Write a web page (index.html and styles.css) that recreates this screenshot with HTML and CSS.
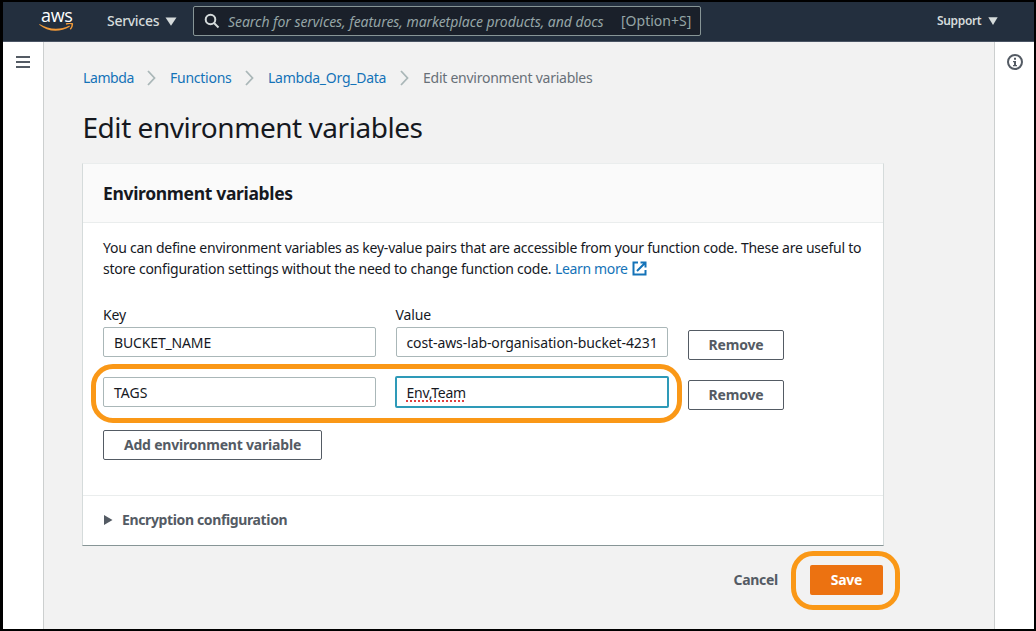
FILE: index.html
```html
<!DOCTYPE html>
<html lang="en">
<head>
<meta charset="utf-8">
<title>Edit environment variables</title>
<link rel="stylesheet" href="styles.css">
</head>
<body>
<div class="window">
  <header class="topbar">
    <div class="logo">
      <span class="logo-text">aws</span>
      <svg class="logo-smile" width="35" height="10" viewBox="0 0 35 10"><path d="M.5 1C9.500 6.500 20.500 7.500 30.500 2.500l.3 1.300C20.500 9.800 8.500 9 .2 1.800z" fill="#f29a38"/><path d="M27 1C29.500.2 32 .1 33.300.8c.2 2-.6 3.800-2 5.500" fill="none" stroke="#f29a38" stroke-width="1.500"/></svg>
    </div>
    <div class="services">Services</div>
    <svg class="caret" width="12" height="9" viewBox="0 0 12 9"><path d="M.5.5h11L6 8.800z" fill="#d5dbdb"/></svg>
    <div class="search">
      <svg width="16" height="16" viewBox="0 0 16 16" fill="none" stroke="#d5dbdb" stroke-width="2"><circle cx="6.500" cy="6.500" r="4.800"/><path d="M10 10l4.500 4.500"/></svg>
      <span class="placeholder">Search for services, features, marketplace products, and docs</span>
      <span class="shortcut">[Option+S]</span>
    </div>
    <div class="support">Support</div>
    <svg class="caret-small" width="10" height="8" viewBox="0 0 10 8"><path d="M.3.3h9.400L5 7.900z" fill="#d5dbdb"/></svg>
  </header>
  <div class="shell">
    <aside class="rail">
      <svg width="14" height="13" viewBox="0 0 14 13" fill="#545b64"><path d="M0 0h14v2H0zM0 5h14v2H0zM0 10h14v2H0z"/></svg>
    </aside>
    <main class="main">
      <nav class="crumbs">
        <a class="c1">Lambda</a>
        <svg class="chev" width="9" height="16" viewBox="0 0 9 16"><path d="M1 1l6.500 7L1 15"/></svg>
        <a class="c2">Functions</a>
        <svg class="chev" width="9" height="16" viewBox="0 0 9 16"><path d="M1 1l6.500 7L1 15"/></svg>
        <a class="c3">Lambda_Org_Data</a>
        <svg class="chev" width="9" height="16" viewBox="0 0 9 16"><path d="M1 1l6.500 7L1 15"/></svg>
        <span class="c4">Edit environment variables</span>
      </nav>
      <h1>Edit environment variables</h1>
      <section class="card">
        <div class="card-head"><h2>Environment variables</h2></div>
        <div class="card-body">
          <p><span class="line1">You can define environment variables as key-value pairs that are accessible from your function code. These are useful to</span><br><span class="line2">store configuration settings without the need to change function code.</span> <a class="learn">Learn more</a><svg class="ext" width="15" height="15" viewBox="0 0 15 15" fill="none" stroke="#1473b8" stroke-width="2"><path d="M6 1.500H1.500v12h12V9M8.500 1.500h5v5M13.500 1.500L5 10"/></svg></p>
          <div class="labels"><span class="label-key">Key</span><span class="label-value">Value</span></div>
          <div class="row">
            <div class="field"><span class="v1">BUCKET_NAME</span></div>
            <div class="field value"><span class="v2">cost-aws-lab-organisation-bucket-4231</span></div>
            <div class="btn remove">Remove</div>
          </div>
          <div class="row">
            <div class="field"><span class="v3">TAGS</span></div>
            <div class="field value focused"><span class="v4">Env,Team</span></div>
            <div class="btn remove">Remove</div>
            <div class="ring ring-row"></div>
          </div>
          <div class="btn add">Add environment variable</div>
        </div>
        <div class="expander">
          <svg width="9" height="10" viewBox="0 0 9 10"><path d="M0 0l8.500 5L0 10z" fill="#545b64"/></svg>
          <span>Encryption configuration</span>
        </div>
      </section>
      <div class="actions">
        <span class="cancel">Cancel</span>
        <div class="save"><span>Save</span><div class="ring ring-save"></div></div>
      </div>
    </main>
    <aside class="rail rail-right">
      <svg width="16" height="16" viewBox="0 0 16 16"><circle cx="8" cy="8" r="7" fill="none" stroke="#545b64" stroke-width="2"/><path d="M7 3.800h2v2H7zM6 7h3v4h1v1.200H6V11h1V8.200H6z" fill="#545b64"/></svg>
    </aside>
  </div>
</div>
</body>
</html>
```
FILE: styles.css
```css
* { box-sizing: border-box; }
body {
  margin: 0;
  background: #000;
  font: 14px/21px "Noto Sans", "Open Sans", sans-serif;
  color: #16191f;
  white-space: nowrap;
}
.window {
  width: 1036px;
  height: 631px;
  border: solid #000;
  border-width: 2px 2px 2px 3px;
  display: flex;
  flex-direction: column;
  overflow: hidden;
}
.topbar {
  height: 40px;
  flex: none;
  background: #232f3e;
  border-bottom: 1px solid #4a5464;
  display: flex;
  align-items: flex-start;
  color: #d5dbdb;
}
.logo { width: 36px; margin: 6px 0 0 36px; display: flex; flex-direction: column; }
.logo-text {
  font: 500 18px/18px "Open Sans", sans-serif;
  letter-spacing: -0.3px;
  color: #fff;
  height: 15px;
  margin-left: 2px;
  margin-top: -2px;
}
.logo-smile { margin-top: 2px; }
.services { margin: 8px 0 0 32px; width: 58px; font-weight: 500; letter-spacing: -0.3px; }
.caret { margin: 15px 0 0; }
.search {
  margin: 4px 0 0 16px;
  width: 508px;
  height: 30px;
  border: 1px solid #879596;
  border-radius: 2px;
  background: #1a202a;
  color: #95a5a6;
  display: flex;
  align-items: center;
  padding-left: 10px;
}
.placeholder { font-style: italic; margin-left: 8px; width: 393px; letter-spacing: -0.05px; }
.shortcut { margin-top: -2px; }
.support { margin: 8px 0 0 236px; width: 51px; font-size: 12px; font-weight: 600; letter-spacing: -0.35px; }
.caret-small { margin-top: 15px; }
.shell { flex: 1; display: flex; background: #f2f2f2; }
.rail {
  width: 41px;
  background: #fff;
  border-right: 1px solid #cccfcf;
  padding: 14px 0 0 13px;
}
.rail svg { display: block; }
.rail-right { width: 40px; border: 0; border-left: 1px solid #cccfcf; padding: 12px 0 0 12px; }
.main { width: 950px; padding: 25px 0 0 39px; }
.crumbs { height: 21px; display: flex; align-items: center; color: #687078; letter-spacing: -0.25px; }
.crumbs a, .learn { color: #1473b8; }
.chev { fill: none; stroke: #aab7b8; stroke-width: 1.8; }
.c1 { width: 64px; letter-spacing: -0.4px; }
.c1 + .chev, .c2 + .chev, .c3 + .chev { margin-right: 14px; }
.c2 { width: 75px; }
.c3 { width: 132px; }
h1 { margin: 21px 0 0; font-size: 28px; line-height: 36px; font-weight: 400; letter-spacing: -0.46px; text-indent: -0.5px; }
.card {
  width: 802px;
  height: 383px;
  margin: 18px 0 0 -1px;
  background: #fff;
  border: 1px solid #d5dbdb;
  border-top-color: #eaeded;
  border-bottom-color: #879596;
}
.card-head { height: 59px; background: #fafafa; border-bottom: 1px solid #eaeded; padding: 18px 20px; }
h2 { margin: 0; font-size: 17.5px; line-height: 22px; font-weight: 700; letter-spacing: -0.33px; }
.card-body { height: 272px; padding: 14px 0 0 20px; }
p { margin: 0; height: 42px; }
.line1 { letter-spacing: -0.243px; }
.line2 { letter-spacing: -0.23px; }
.learn { letter-spacing: -0.35px; }
.ext { margin-left: 4px; vertical-align: -2px; }
.labels { display: grid; grid-template-columns: 292.5px 200px; margin-top: 25px; height: 23px; letter-spacing: -0.1px; }
.row { position: relative; display: flex; height: 50px; }
.field {
  width: 273px;
  height: 30px;
  border: 1px solid #aab7b8;
  border-radius: 2px;
  padding: 4px 10px;
  margin-right: 20px;
}
.field.value { width: 272px; padding-left: 9.5px; }
.field.focused {
  width: 274px;
  height: 32px;
  margin: -1px 19px 0 -1px;
  border: 2px solid #2e9ab8;
}
.v1 { letter-spacing: -0.15px; }
.v2 { letter-spacing: -0.1px; }
.v4 {
  letter-spacing: -0.25px;
  text-decoration: underline dotted #e04040 2px;
  text-underline-offset: 2px;
  text-decoration-skip-ink: none;
}
.btn {
  height: 30px;
  border: 1px solid #545b64;
  border-radius: 2px;
  color: #545b64;
  font-weight: 700;
  line-height: 28px;
  text-align: center;
  letter-spacing: -0.2px;
}
.remove { width: 96px; margin-top: 3px; }
.add { width: 219px; margin-top: 3px; }
.ring { position: absolute; border: 5px solid #fa9817; border-radius: 22px; }
.ring-row { left: -12px; top: -13px; width: 591px; height: 59px; }
.expander {
  height: 49px;
  border-top: 1px solid #eaeded;
  display: flex;
  align-items: center;
  padding-left: 21px;
  gap: 9px;
  color: #545b64;
  font-weight: 700;
  letter-spacing: -0.37px;
}
.expander span { margin-top: -2px; }
.actions {
  display: flex;
  width: 800px;
  margin-top: 19px;
  justify-content: flex-end;
  font-weight: 700;
  line-height: 30px;
  letter-spacing: -0.3px;
}
.cancel { width: 76.5px; color: #545b64; }
.save { position: relative; width: 73px; height: 30px; background: #ec7211; border-radius: 2px; color: #fff; text-align: center; }
.ring-save { left: -19px; top: -14px; width: 109px; height: 59px; }
```
